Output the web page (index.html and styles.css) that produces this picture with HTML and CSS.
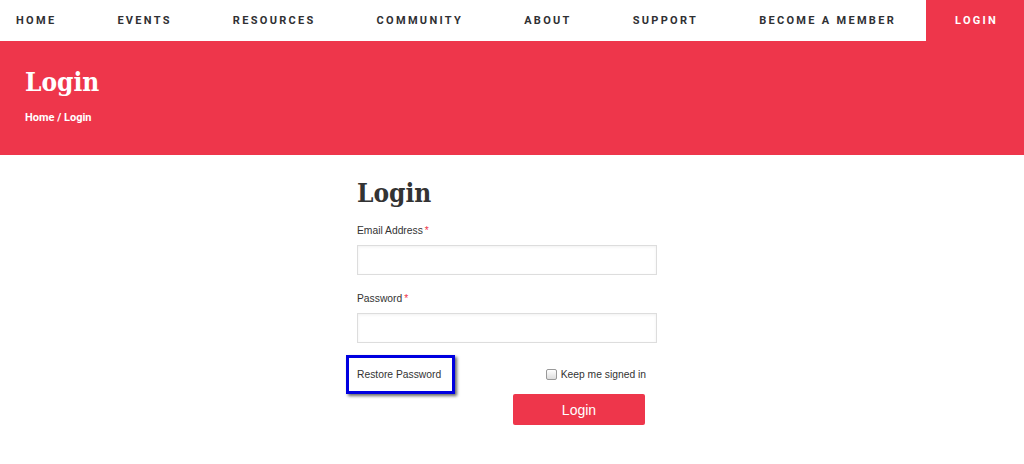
FILE: index.html
```html
<!DOCTYPE html>
<html>
<head>
<meta charset="utf-8">
<link rel="stylesheet" href="styles.css">
</head>
<body>
<nav class="nav">
  <a class="nav-item first" href="#">HOME</a>
  <a class="nav-item" href="#">EVENTS</a>
  <a class="nav-item" href="#">RESOURCES</a>
  <a class="nav-item" href="#">COMMUNITY</a>
  <a class="nav-item" href="#">ABOUT</a>
  <a class="nav-item" href="#">SUPPORT</a>
  <a class="nav-item" href="#">BECOME A MEMBER</a>
  <a class="nav-item active" href="#">LOGIN</a>
</nav>
<header class="banner">
  <h1 class="banner-title">Login</h1>
  <div class="crumbs">Home / Login</div>
</header>
<main class="main">
  <form class="form">
    <h2 class="form-title">Login</h2>
    <label class="label">Email Address<span class="req">*</span></label>
    <input class="input" type="text">
    <label class="label">Password<span class="req">*</span></label>
    <input class="input" type="password">
    <div class="row">
      <a class="restore" href="#">Restore Password<span class="mark"></span></a>
      <label class="keep"><span class="check"></span>Keep me signed in</label>
    </div>
    <div class="btn-row"><button class="btn" type="button">Login</button></div>
  </form>
</main>
</body>
</html>
```
FILE: styles.css
```css
* { box-sizing: border-box; }
body { margin: 0; font-family: Roboto, "Liberation Sans", sans-serif; background: #fff; }
.nav { display: flex; height: 41px; align-items: stretch; background: #fff; }
.nav-item {
  display: flex; align-items: center; padding: 0 30px 0 31px; white-space: nowrap; flex-shrink: 0;
  font-size: 11px; font-weight: 700; letter-spacing: 2.3px; color: #2f3033; text-decoration: none;
}
.nav-item.first { padding-left: 16px; }
.nav-item.active { background: #ee364b; color: #fff; margin-left: auto; width: 98px; padding: 0 0 0 29px; }
.banner { background: #ee364b; height: 114px; padding: 26px 25px 0; color: #fff; }
.banner-title { margin: 0; font-family: "DejaVu Serif Condensed", "DejaVu Serif", serif; font-weight: 700; font-size: 26px; line-height: 30px; }
.crumbs { margin-top: 14px; font-size: 11px; font-weight: 700; }
.main { display: flex; justify-content: center; padding-top: 22px; }
.form { width: 300px; margin-right: 10px; display: flex; flex-direction: column; }
.form-title { margin: 0 0 15px; font-family: "DejaVu Serif Condensed", "DejaVu Serif", serif; font-weight: 700; font-size: 26px; line-height: 32px; color: #333; }
.label { font-family: "Liberation Sans", Arial, sans-serif; font-size: 10.3px; line-height: 13px; color: #333; margin-bottom: 8px; }
.req { color: #ee364b; margin-left: 2px; }
.input { height: 30px; border: 1px solid #ddd; background: #fff; box-shadow: inset 0 1px 3px rgba(0,0,0,0.06); margin-bottom: 17px; }
.row { display: flex; justify-content: space-between; align-items: center; margin-top: 8px; }
.restore { position: relative; font-family: "Liberation Sans", Arial, sans-serif; font-size: 10.3px; line-height: 13px; color: #333; text-decoration: none; }
.mark { position: absolute; left: -11px; top: -13px; width: 109px; height: 39px; border: 3px solid #0000e0; box-shadow: 2px 2px 3px rgba(0,0,0,0.6); }
.keep { display: flex; align-items: center; font-family: "Liberation Sans", Arial, sans-serif; font-size: 10.3px; line-height: 13px; color: #333; margin-right: 11px; }
.check { width: 11px; height: 11px; border: 1px solid #999; border-radius: 2px; background: linear-gradient(#fff, #ddd); margin-right: 4px; }
.btn-row { display: flex; justify-content: flex-end; margin-top: 13px; margin-right: 12px; }
.btn { width: 132px; height: 31px; border: 0; border-radius: 2px; background: #ee364b; color: #fff; font-family: "Liberation Sans", Arial, sans-serif; font-size: 14px; }
```
